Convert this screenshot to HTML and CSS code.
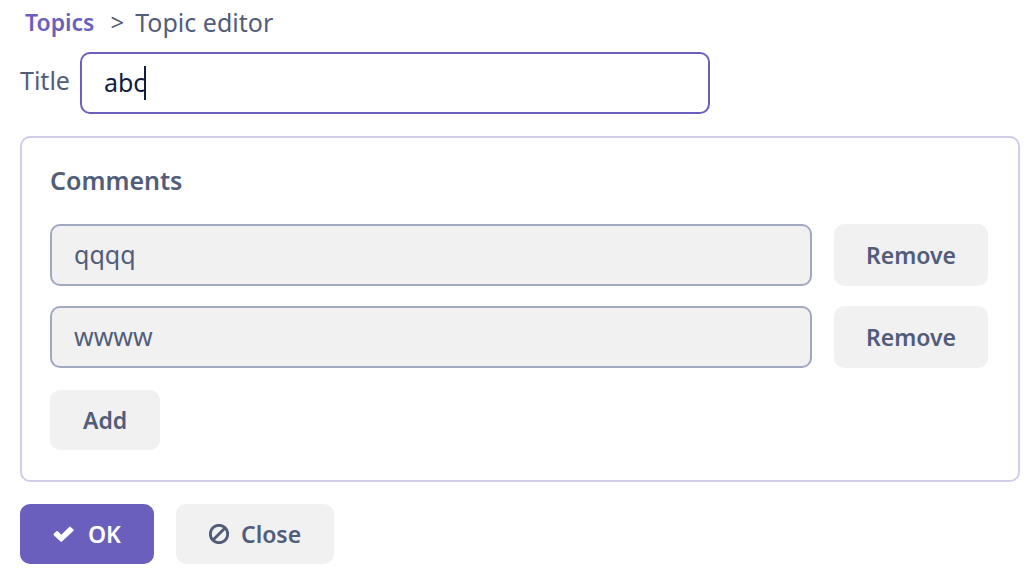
FILE: index.html
```html
<!DOCTYPE html>
<html lang="en">
<head>
<meta charset="utf-8">
<title>Topic editor</title>
<link rel="stylesheet" href="styles.css">
</head>
<body>
<main class="page">
  <nav class="breadcrumb" aria-label="Breadcrumb">
    <a class="breadcrumb-link" href="#topics">Topics</a>
    <span class="breadcrumb-separator">&gt;</span>
    <span>Topic editor</span>
  </nav>
  <form class="editor">
    <div class="title-row">
      <label class="title-label" for="title">Title</label>
      <div class="title-field">
        <input class="input input-active" id="title" type="text" value="abc">
        <span class="caret" aria-hidden="true"></span>
      </div>
    </div>
    <section class="comments">
      <h2 class="comments-heading">Comments</h2>
      <div class="comment-row">
        <input class="input input-readonly" type="text" value="qqqq" aria-label="Comment 1" readonly>
        <button class="button" type="button">Remove</button>
      </div>
      <div class="comment-row">
        <input class="input input-readonly" type="text" value="wwww" aria-label="Comment 2" readonly>
        <button class="button" type="button">Remove</button>
      </div>
      <button class="button button-wide button-add" type="button">Add</button>
    </section>
    <div class="actions">
      <button class="button button-wide button-primary" type="button">
        <svg class="icon-check" viewBox="0 0 23 20" aria-hidden="true"><path d="M.8 11.200 Q.3 10.500 .8 9.800 L3.400 7.300 Q4.100 6.700 4.800 7.300 L8.300 10.800 L16.200 2.900 Q16.900 2.300 17.600 2.900 L20.500 5.400 Q21.100 6.100 20.500 6.800 L9 17.600 Q8.300 18.200 7.600 17.600 Z" fill="currentColor"/></svg>
        OK
      </button>
      <button class="button button-wide" type="button">
        <svg class="icon" viewBox="0 0 20 20" aria-hidden="true"><g fill="none" stroke="currentColor" stroke-width="2.900"><circle cx="10" cy="10" r="8.700"/><path d="M4 16 L16 4"/></g></svg>
        Close
      </button>
    </div>
  </form>
</main>
</body>
</html>
```
FILE: styles.css
```css
* {
  box-sizing: border-box;
}

body {
  margin: 0;
  background: #fff;
  color: #525d7a;
  font-family: "Noto Sans", sans-serif;
  font-size: 25px;
  line-height: 36px;
}

.page {
  padding: 4px 10px 14px 20px;
}

.breadcrumb {
  display: flex;
  align-items: center;
  padding-left: 5px;
  margin-bottom: 12px;
}

.breadcrumb-link {
  color: #6b5fbd;
  font-size: 23px;
  font-weight: 600;
  text-decoration: none;
}

.breadcrumb-separator {
  margin: 0 11px 0 16px;
  font-size: 24px;
}

.title-row {
  display: flex;
  align-items: center;
  gap: 10px;
  margin-bottom: 22px;
}

.title-label {
  padding-bottom: 6px;
}

.title-field {
  position: relative;
  width: 630px;
}

.input {
  display: block;
  width: 100%;
  height: 62px;
  padding: 0 22px 2px;
  border: 2px solid #a0a9c0;
  border-radius: 10px;
  outline: none;
  color: #525d7a;
  font: inherit;
}

.input-active {
  border-color: #6b5fbd;
  background: #fff;
  color: #101d42;
}

.input-readonly {
  background: #f1f1f1;
}

.caret {
  position: absolute;
  top: 14px;
  left: 64px;
  width: 2px;
  height: 34px;
  background: #101d42;
}

.comments {
  padding: 24px 30px 30px 28px;
  border: 2px solid #d1cceb;
  border-radius: 10px;
}

.comments-heading {
  margin: 0 0 26px;
  font-size: 25px;
  font-weight: 600;
}

.comment-row {
  display: flex;
  gap: 22px;
  margin-bottom: 20px;
}

.button {
  display: inline-flex;
  align-items: center;
  justify-content: center;
  flex: none;
  gap: 12px;
  min-height: 60px;
  padding: 0 32px;
  border: 0;
  border-radius: 10px;
  background: #f1f1f1;
  color: #525d7a;
  font: inherit;
  font-size: 23px;
  font-weight: 600;
}

.button-wide {
  padding: 0 33px;
}

.button-add {
  display: flex;
  margin-top: 22px;
}

.button-primary {
  background: #6b5fbd;
  color: #fff;
}

.actions {
  display: flex;
  gap: 22px;
  margin-top: 22px;
}

.icon {
  width: 20px;
  height: 20px;
}

.icon-check {
  width: 23px;
  height: 20px;
}
```
